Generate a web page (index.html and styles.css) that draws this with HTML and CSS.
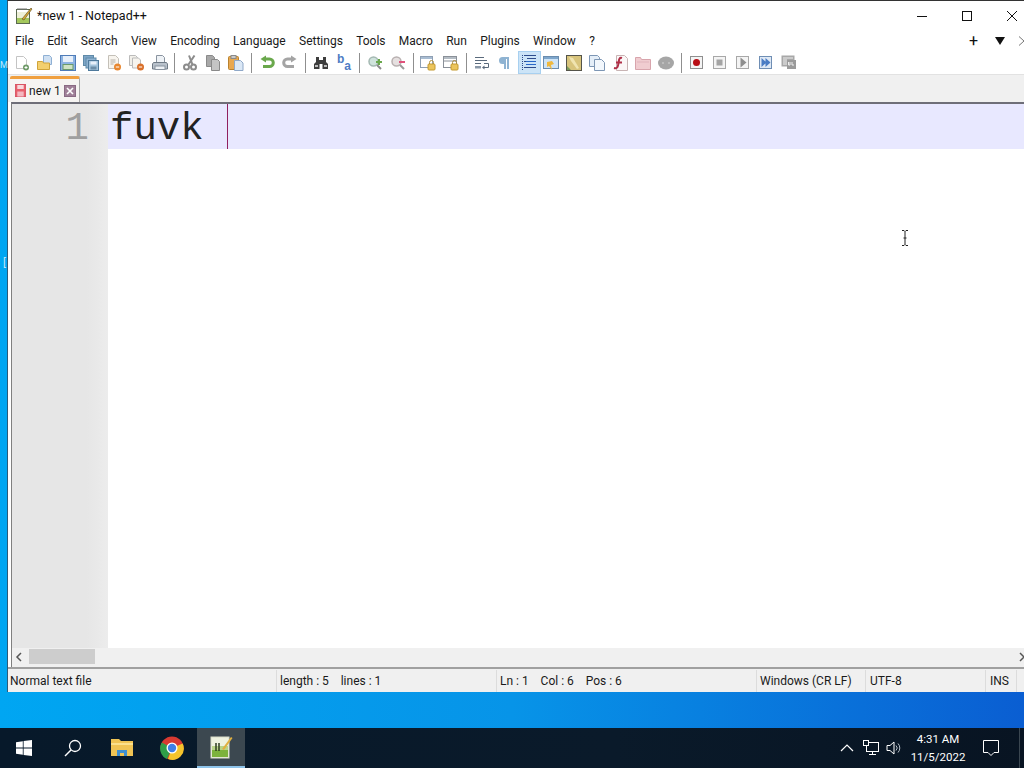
FILE: index.html
```html
<!DOCTYPE html>
<html lang="en">
<head>
    <meta charset="UTF-8">
    <meta name="viewport" content="width=device-width, initial-scale=1.0">
    <title>*new 1 - Notepad++</title>
    <link rel="stylesheet" href="styles.css">
</head>
<body>
    <svg class="sprite" width="0" height="0">
        <symbol id="i-new" viewBox="0 0 16 16"><path d="M2.500 1.500h7l3 3v9h-10z" fill="#fff" stroke="#c4c4c4"/><circle cx="12" cy="12.500" r="3" fill="#6f9a68"/><path d="M10.500 12.500h3M12 11v3" stroke="#fff"/></symbol>
        <symbol id="i-open" viewBox="0 0 16 16"><path d="M6.500 .5h6l2 2v7h-8z" fill="#cfe0f2" stroke="#8fb0d4"/><path d="M.5 6.500h5l1 1.500h6v6.500h-12z" fill="#f3cf6e" stroke="#d0a43a"/></symbol>
        <symbol id="i-save" viewBox="0 0 16 16"><rect x=".5" y=".5" width="15" height="15" fill="#8db4e2" stroke="#4f7cb8"/><rect x="3" y="1" width="10" height="6" fill="#e8f0fa"/><rect x="3" y="9.500" width="10" height="5" fill="#cfe3c4" stroke="#6a9a6a"/></symbol>
        <symbol id="i-saveall" viewBox="0 0 16 16"><rect x=".5" y=".5" width="10" height="10" fill="#7fa6c8" stroke="#5f8aa8"/><rect x="3" y="3" width="10" height="10" fill="#8fb3d2" stroke="#5f8aa8"/><rect x="5.500" y="5.500" width="10" height="10" fill="#a4c4dc" stroke="#4f7a9c"/><rect x="7.500" y="6.500" width="6" height="3" fill="#e8f0fa"/><rect x="7.500" y="11.500" width="6" height="3" fill="#6d8ea8"/></symbol>
        <symbol id="i-close" viewBox="0 0 16 16"><path d="M2.500 .5h7l3 3v10h-10z" fill="#f7f4ee" stroke="#c4c0b8"/><path d="M4.500 5h5M4.500 7h5M4.500 9h3" stroke="#b5b0a8"/><circle cx="11.500" cy="12" r="3.500" fill="#e8862e"/><path d="M9.800 12h3.400" stroke="#fff"/></symbol>
        <symbol id="i-closeall" viewBox="0 0 16 16"><path d="M.5 .5h6l2 2v8h-8z" fill="#f2f0ea" stroke="#bbb"/><path d="M3.500 3h6l2 2v8h-8z" fill="#f7f4ee" stroke="#bbb"/><circle cx="11.500" cy="12" r="3.500" fill="#d9702a"/><path d="M9.800 12h3.400" stroke="#fff"/></symbol>
        <symbol id="i-print" viewBox="0 0 16 16"><path d="M4.500 .5h6l2 2v5h-8z" fill="#eef2f6" stroke="#8a94a0"/><path d="M1.500 7.500h13l1 1.500v5h-15v-5z" fill="#b9c2cc" stroke="#6f7a86"/><rect x="3" y="11" width="10" height="3.500" fill="#eef2f6" stroke="#8a94a0"/></symbol>
        <symbol id="i-cut" viewBox="0 0 16 16"><path d="M12.500 .5L6.500 9.500M7 .5l3.500 9" stroke="#8c8c8c" stroke-width="2"/><circle cx="4.500" cy="12" r="2.500" fill="none" stroke="#8c8c8c" stroke-width="2"/><circle cx="11.500" cy="12" r="2.500" fill="none" stroke="#8c8c8c" stroke-width="2"/></symbol>
        <symbol id="i-copy" viewBox="0 0 16 16"><path d="M1.500 .5h6l2 2v9h-8z" fill="#a8a8a8" stroke="#8a8a8a"/><path d="M6.500 4.500h6l2 2v9h-8z" fill="#c4c4c4" stroke="#8a8a8a"/></symbol>
        <symbol id="i-paste" viewBox="0 0 16 16"><rect x=".5" y="1.500" width="10" height="13" rx="1" fill="#e8a850" stroke="#b8822f"/><rect x="3" y=".5" width="5" height="3" fill="#c9c9c9" stroke="#8a8a8a"/><path d="M6.500 5.500h6l2.500 2.500v7.500h-8.500z" fill="#dbe8f6" stroke="#8fa8c8"/></symbol>
        <symbol id="i-undo" viewBox="0 0 16 16"><path d="M6 4h4.500a3.800 3.800 0 0 1 0 7.600H4" fill="none" stroke="#6aa84c" stroke-width="3"/><path d="M7 .5v7L1.500 4z" fill="#6aa84c"/></symbol>
        <symbol id="i-redo" viewBox="0 0 16 16"><path d="M10 4H5.500a3.800 3.800 0 0 0 0 7.600H12" fill="none" stroke="#a4a4a4" stroke-width="3"/><path d="M9 .5v7L14.500 4z" fill="#a4a4a4"/></symbol>
        <symbol id="i-find" viewBox="0 0 16 16"><path d="M3 2h3v3h4V2h3v5l2 2v5H9.500V9h-3v5H1V9l2-2z" fill="#3d3d3d"/><path d="M2 10h3v2H2zM11 10h3v2h-3z" fill="#bbb"/></symbol>
        <symbol id="i-zoomin" viewBox="0 0 16 16"><circle cx="6.500" cy="6.500" r="4.500" fill="#cfe3dc" stroke="#a4b8b2" stroke-width="1.500"/><path d="M10 10l4 4" stroke="#8a8a8a" stroke-width="2"/><path d="M9 7h6M12 4v6" stroke="#6aa84c" stroke-width="2"/></symbol>
        <symbol id="i-zoomout" viewBox="0 0 16 16"><circle cx="6.500" cy="6.500" r="4.500" fill="#e6e0e0" stroke="#b8b0b0" stroke-width="1.500"/><path d="M10 10l4 4" stroke="#9a9a9a" stroke-width="2"/><path d="M9 7h6" stroke="#e0507a" stroke-width="2"/></symbol>
        <symbol id="i-sync-v" viewBox="0 0 16 16"><rect x=".5" y="1.500" width="12" height="11" fill="#fff" stroke="#8fa0b4"/><rect x="1" y="2" width="11" height="2" fill="#a8bcd2"/><rect x="8" y="9" width="7" height="6" rx="1" fill="#ecc55c" stroke="#c49a30"/><path d="M9.500 9V7.500a2 2 0 0 1 4 0V9" fill="none" stroke="#b09040"/></symbol>
        <symbol id="i-sync-h" viewBox="0 0 16 16"><rect x=".5" y="1.500" width="13" height="11" fill="#fff" stroke="#8a9098"/><path d="M1 6h12" stroke="#8a9098"/><rect x="1" y="2" width="12" height="2" fill="#b4bcc4"/><rect x="8" y="9" width="7" height="6" rx="1" fill="#ecc55c" stroke="#c49a30"/><path d="M9.500 9V7.500a2 2 0 0 1 4 0V9" fill="none" stroke="#b09040"/></symbol>
        <symbol id="i-wrap" viewBox="0 0 16 16"><path d="M1 2.500h9M1 5.500h12M1 8.500h6" stroke="#5a6a7c"/><path d="M10 8.500h4.500v4H9" fill="none" stroke="#5a6a7c"/><path d="M1 11h6v2.500H1z" fill="#8a98a8"/><path d="M10.500 10.500v4L8 12.500z" fill="#5a6a7c"/></symbol>
        <symbol id="i-para" viewBox="0 0 16 16"><path d="M7 2H5.500a3.500 3.500 0 0 0 0 7H7v5h2V4h1v10h2V2z" fill="#8fb3d2"/></symbol>
        <symbol id="i-indent" viewBox="0 0 16 16"><path d="M3 .5h12M6 3.500h9M3 6.500h12M6 9.500h9M3 12.500h12" stroke="#2e4c8c"/><path d="M1.500 0v16" stroke="#2e4c8c" stroke-dasharray="1 1"/><path d="M5 6h10v1H5zM5 9h10v1H5z" fill="#2968c8"/></symbol>
        <symbol id="i-lang" viewBox="0 0 16 16"><rect x=".5" y="1.500" width="15" height="12" fill="#cfe4f6" stroke="#6a8cae"/><rect x="1" y="2" width="14" height="2" fill="#7ea6cc"/><path d="M4 7l5-1 2 3-3 1 1 5-3-4-2 1z" fill="#f0b83c"/></symbol>
        <symbol id="i-map" viewBox="0 0 16 16"><rect x=".5" y=".5" width="15" height="15" fill="#d8c47c" stroke="#55544a"/><path d="M3 2l4 1 6 10-2 1L5 6z" fill="#f0e4b0"/><path d="M1 11l4 4H1z" fill="#7a9a5a"/></symbol>
        <symbol id="i-doc" viewBox="0 0 16 16"><path d="M.5 .5h8l2 2v9h-10z" fill="#e4eef8" stroke="#7d96b4"/><path d="M5.500 4.500h7l3 3v8h-10z" fill="#f2f7fc" stroke="#7d96b4"/></symbol>
        <symbol id="i-func" viewBox="0 0 16 16"><path d="M4.500 .5h8l3 3v12h-11z" fill="#fbf7f7" stroke="#c8b4b4"/><path d="M10 3C7 2 7 5 6.500 8 6 11 6 14 2 13M4 7.500h6" fill="none" stroke="#b03048" stroke-width="2"/></symbol>
        <symbol id="i-folder" viewBox="0 0 16 16"><path d="M.5 2.500h5l1 2h9v10H.5z" fill="#f0ccd0" stroke="#d8a4ac"/><path d="M2 7h12" stroke="#e0b4bc"/></symbol>
        <symbol id="i-monitor" viewBox="0 0 16 16"><ellipse cx="8" cy="8" rx="8" ry="6.500" fill="#a6a6a6"/><circle cx="5" cy="8" r="1" fill="#c4c4c4"/><circle cx="11" cy="8" r="1" fill="#c4c4c4"/></symbol>
        <symbol id="i-rec" viewBox="0 0 16 16"><rect x="1.500" y="1.500" width="12" height="12" fill="#f4f4f4" stroke="#8f8f8f"/><circle cx="7.500" cy="7.500" r="3.500" fill="#b80c14"/></symbol>
        <symbol id="i-stop" viewBox="0 0 16 16"><rect x="1.500" y="1.500" width="12" height="12" fill="#f4f4f4" stroke="#a8a8a8"/><rect x="4.500" y="4.500" width="6" height="6" fill="#a4a4a4"/></symbol>
        <symbol id="i-play" viewBox="0 0 16 16"><rect x="1.500" y="1.500" width="12" height="12" fill="#f4f4f4" stroke="#a8a8a8"/><path d="M5.500 2.500l6 5-6 5z" fill="#8e8e8e"/></symbol>
        <symbol id="i-playall" viewBox="0 0 16 16"><rect x="1.500" y="1.500" width="12" height="12" fill="#dfe9f5" stroke="#6f8eb4"/><path d="M3.500 3l5 4.500-5 4.500zM7.500 3l5 4.500-5 4.500z" fill="#4a7cc4"/></symbol>
        <symbol id="i-savemacro" viewBox="0 0 16 16"><rect x=".5" y=".5" width="13" height="11" fill="#a8a8a8"/><path d="M2 3h10M2 5h4M2 7h4M2 9h4" stroke="#eee"/><rect x="6" y="5" width="9" height="9" fill="#9a9a9a"/><path d="M7.500 7v3h1.500V7M11 7v3h2" stroke="#eee" fill="none"/></symbol>
    </svg>

    <div class="desktop">
        <span class="desk-label label-m">M</span>
        <span class="desk-label label-b">[</span>

        <div class="window">
            <div class="title-bar">
                <svg class="app-icon" viewBox="0 0 18 18" width="18" height="18">
                    <rect x="1.500" y="2.500" width="13" height="14" fill="#eef0d8" stroke="#5a6a50"/>
                    <path d="M2 3h12v2H2z" fill="#fff"/>
                    <path d="M3 3v-2M5 3v-2M7 3v-2M9 3v-2M11 3v-2" stroke="#777"/>
                    <path d="M2 11h12v5H2z" fill="#a4c85c"/>
                    <path d="M7 12L16 1l1 1L9 13z" fill="#d8a838" stroke="#5a4a20" stroke-width=".6"/>
                </svg>
                <span class="app-title">*new 1 - Notepad++</span>
                <div class="win-controls">
                    <span class="win-btn"><svg width="12" height="12" viewBox="0 0 12 12"><path d="M1 6.500h10" stroke="#111"/></svg></span>
                    <span class="win-btn"><svg width="12" height="12" viewBox="0 0 12 12"><rect x="1.500" y="1.500" width="9" height="9" fill="none" stroke="#111"/></svg></span>
                    <span class="win-btn"><svg width="12" height="12" viewBox="0 0 12 12"><path d="M1 1l10 10M11 1L1 11" stroke="#111"/></svg></span>
                </div>
            </div>

            <div class="menu-bar">
                <span>File</span><span>Edit</span><span>Search</span><span>View</span><span>Encoding</span><span>Language</span><span>Settings</span><span>Tools</span><span>Macro</span><span>Run</span><span>Plugins</span><span>Window</span><span>?</span>
                <div class="menu-right">
                    <span class="menu-plus">+</span>
                    <span class="menu-down"></span>
                    <svg width="7" height="10" viewBox="0 0 7 10"><path d="M1 .5L6 5 1 9.500" fill="none" stroke="#777"/></svg>
                </div>
            </div>

            <div class="toolbar" id="toolbar"></div>

            <div class="tab-strip">
                <div class="tab">
                    <svg width="11" height="13" viewBox="0 0 12 13" preserveAspectRatio="none"><rect x=".5" y=".5" width="11" height="12" fill="#e8606c" stroke="#d85464"/><rect x="2.500" y="1" width="7" height="4" fill="#f8d8dc"/><rect x="2.500" y="7.500" width="7" height="5" fill="#f4b8c0"/></svg>
                    <span>new 1</span>
                    <svg width="12" height="12" viewBox="0 0 12 12"><rect x=".5" y=".5" width="11" height="11" fill="#a08098" stroke="#8a6a84"/><path d="M3 3l6 6M9 3L3 9" stroke="#fff" stroke-width="1.600"/></svg>
                </div>
            </div>

            <div class="editor">
                <div class="gutter">
                    <div class="line-number">1</div>
                </div>
                <div class="text-area">
                    <div class="current-line"><span class="code">fuvk </span><span class="caret"></span></div>
                </div>
            </div>

            <div class="h-scroll">
                <svg width="8" height="10" viewBox="0 0 8 10"><path d="M6 1L2 5l4 4" fill="none" stroke="#555" stroke-width="1.500"/></svg>
                <div class="h-thumb"></div>
                <svg class="h-right" width="8" height="10" viewBox="0 0 8 10"><path d="M2 1l4 4-4 4" fill="none" stroke="#555" stroke-width="1.500"/></svg>
            </div>

            <div class="status-bar">
                <div class="panel p-type">Normal text file</div>
                <div class="panel p-size">length : 5 &nbsp;&nbsp; lines : 1</div>
                <div class="panel p-pos">Ln : 1 &nbsp;&nbsp; Col : 6 &nbsp;&nbsp; Pos : 6</div>
                <div class="panel p-eol">Windows (CR LF)</div>
                <div class="panel p-enc">UTF-8</div>
                <div class="panel p-ins">INS</div>
            </div>
        </div>

        <div class="wallpaper"></div>

        <div class="taskbar">
            <div class="task-item"><svg width="16" height="16" viewBox="0 0 16 16"><path d="M0 2.200l6.800-1v6.400H0zM7.600 1.100L16 0v7.600H7.600zM0 8.400h6.800v6.400l-6.800-1zM7.600 8.400H16V16l-8.400-1.100z" fill="#fff"/></svg></div>
            <div class="task-item search"><svg width="18" height="18" viewBox="0 0 18 18"><circle cx="11" cy="7" r="5.500" fill="none" stroke="#fff" stroke-width="1.300"/><path d="M7 11l-6 6" stroke="#fff" stroke-width="1.500"/></svg></div>
            <div class="task-item wide"><svg width="22" height="20" viewBox="0 0 22 20"><path d="M0 1h8l2 2h12v15H0z" fill="#f0c454"/><path d="M0 5h22v2H0z" fill="#fbe08c"/><path d="M6 12h10v6H6z" fill="#3f8fd0"/><path d="M9 15h4v3H9z" fill="#f0c454"/></svg></div>
            <div class="task-item wide"><svg width="24" height="24" viewBox="0 0 24 24"><circle cx="12" cy="12" r="11.500" fill="#d83a32"/><path d="M12 12L22.700 7.500A11.500 11.500 0 0 1 8 23z" fill="#f5c42c"/><path d="M12 12L7 23A11.500 11.500 0 0 1 1.800 6.500z" fill="#2f9e48"/><circle cx="12" cy="12" r="5.500" fill="#fff"/><circle cx="12" cy="12" r="4.200" fill="#3f80e8"/></svg></div>
            <div class="task-item active"><svg width="24" height="24" viewBox="0 0 24 24"><rect x="2" y="2" width="18" height="21" fill="#eef2e0" stroke="#d8dcc8"/><rect x="3" y="15" width="16" height="7" fill="#7cb23c"/><path d="M3 11h16v4H3z" fill="#b8d488"/><path d="M7 8v8M10 8v8" stroke="#2c3c20" stroke-width="1.500"/><path d="M13 14L22 2l1.500 1L15 15z" fill="#e0b040"/></svg></div>

            <div class="tray">
                <svg class="tray-up" width="14" height="8" viewBox="0 0 14 8"><path d="M1 7l6-6 6 6" fill="none" stroke="#fff" stroke-width="1.200"/></svg>
                <svg width="16" height="16" viewBox="0 0 16 16"><rect x="3.500" y="2.500" width="12" height="9" fill="none" stroke="#fff"/><rect x=".5" y=".5" width="5" height="5" fill="#0b1a28" stroke="#fff"/><path d="M9.500 11.500v3M6 14.500h7" stroke="#fff"/></svg>
                <svg width="16" height="16" viewBox="0 0 16 16"><path d="M1 5.500h3l4-3.500v12l-4-3.500H1z" fill="none" stroke="#fff"/><path d="M10 5.500a3.500 3.500 0 0 1 0 5M12 3.500a6.500 6.500 0 0 1 0 9" fill="none" stroke="#b8c0c8"/></svg>
                <div class="clock"><span>4:31 AM</span><span>11/5/2022</span></div>
                <svg class="notify" width="16" height="16" viewBox="0 0 16 16"><path d="M.5 .5h15v12H11l-3 3-3-3H.5z" fill="none" stroke="#fff"/></svg>
                <div class="show-desktop"></div>
            </div>
        </div>

        <svg class="ibeam" width="8" height="16" viewBox="0 0 8 16"><path d="M1 .5h2l1 1 1-1h2M4 1.500v13M1 15.500h2l1-1 1 1h2M2.500 8h3" fill="none" stroke="#222"/></svg>
    </div>

    <script>
        // Toolbar layout: icon name, null for a separator
        const tools = ['new','open','save','saveall','close','closeall','print',null,'cut','copy','paste',null,'undo','redo',null,'find','replace',null,'zoomin','zoomout',null,'sync-v','sync-h',null,'wrap','para','indent','lang','map','doc','func','folder','monitor',null,'rec','stop','play','playall','savemacro'];
        const toolbar = document.getElementById('toolbar');
        toolbar.innerHTML = tools.map(name => {
            if (!name) return '<span class="tool-sep"></span>';
            if (name === 'replace') return '<span class="tool replace-icon"><b>b</b><b>a</b></span>';
            const active = name === 'indent' ? ' active' : '';
            return `<span class="tool${active}"><svg width="16" height="16"><use href="#i-${name}"/></svg></span>`;
        }).join('');
    </script>
</body>
</html>
```

FILE: styles.css
```css
:root {
    --chrome: #f0f0f0;
    --text: #1a1a1a;
}

html, body {
    margin: 0;
    height: 100%;
    overflow: hidden;
}

body {
    font-family: Roboto, "Liberation Sans", sans-serif;
    font-size: 12px;
    color: var(--text);
}

.sprite {
    position: absolute;
}

.desktop {
    position: relative;
    width: 1024px;
    height: 768px;
    overflow: hidden;
    display: flex;
    flex-direction: column;
    background: linear-gradient(90deg, #00a6f2 0%, #0794e8 50%, #0a5ed2 100%);
}

/* Bits of desktop icon labels showing left of the window */
.desk-label {
    position: absolute;
    left: 0;
    font-size: 9px;
    line-height: 10px;
    color: #c4e8fa;
}

.label-m { top: 60px; }
.label-b { top: 258px; left: 3px; font-size: 11px; }

/* Window */
.window {
    width: 1027px;
    height: 692px;
    margin-left: 7px;
    flex: none;
    box-sizing: border-box;
    border-top: 1px solid #333;
    border-left: 1px solid #2d5a78;
    background: #fff;
    display: flex;
    flex-direction: column;
}

.title-bar {
    height: 29px;
    display: flex;
    align-items: center;
    padding-left: 7px;
    gap: 4px;
    font-size: 12.5px;
    flex: none;
}

.app-title {
    color: #111;
}

.win-controls {
    margin-left: auto;
    display: flex;
}

.win-btn {
    width: 45px;
    height: 29px;
    display: flex;
    align-items: center;
    justify-content: center;
}

.menu-bar {
    height: 21px;
    display: flex;
    align-items: center;
    gap: 13.3px;
    padding-left: 7px;
    flex: none;
}

.menu-right {
    margin-left: auto;
    display: flex;
    align-items: center;
    gap: 13px;
    padding-right: 9px;
}

.menu-plus {
    font-size: 16px;
    line-height: 1;
    color: #111;
    margin-right: 4px;
}

.menu-down {
    width: 0;
    height: 0;
    border-left: 5px solid transparent;
    border-right: 5px solid transparent;
    border-top: 8px solid #111;
}

.toolbar {
    height: 23px;
    display: flex;
    align-items: center;
    padding-left: 2px;
    flex: none;
    border-bottom: 1px solid #e2e2e2;
}

.tool {
    width: 23px;
    height: 23px;
    display: flex;
    align-items: center;
    justify-content: center;
    box-sizing: border-box;
}

.tool.active {
    background: #cce4f7;
    border: 1px solid #a8d0f0;
    margin: 0 -1px 0 1px;
}

.tool-sep {
    width: 7.8px;
    height: 20px;
    background: linear-gradient(#8f8f8f, #8f8f8f) center / 1px 100% no-repeat;
}

.replace-icon {
    padding: 3px 4px;
    font: 700 12px/10px "Liberation Sans", sans-serif;
    color: #4f7cc4;
}

.replace-icon b:first-child {
    align-self: flex-start;
}

.replace-icon b:last-child {
    align-self: flex-end;
}

.tab-strip {
    height: 27px;
    background: var(--chrome);
    display: flex;
    align-items: flex-end;
    padding-left: 2px;
    flex: none;
}

.tab {
    width: 70px;
    height: 26px;
    box-sizing: border-box;
    background: #f6f4f2;
    border-top: 3px solid #f0a040;
    border-right: 1px solid #a8a8a8;
    border-radius: 2px 2px 0 0;
    display: flex;
    align-items: center;
    gap: 3px;
    padding-left: 5px;
}

/* Editor */
.editor {
    flex: 1;
    display: flex;
    border-top: 2px solid #6e6e78;
    border-left: 1px solid #808080;
    margin-left: 3px;
    min-height: 0;
}

.gutter {
    width: 96px;
    flex: none;
    background: linear-gradient(90deg, #e6e6e6 0%, #e6e6e6 78%, #ececec 100%);
}

.line-number {
    height: 45px;
    padding-right: 19px;
    text-align: right;
    font: 39px/51px "Liberation Mono", monospace;
    color: #a0a0a0;
}

.text-area {
    flex: 1;
    background: #fff;
}

.current-line {
    height: 45px;
    background: #e8e8ff;
    display: flex;
    padding-left: 2px;
}

.code {
    font: 39px/51px "Liberation Mono", monospace;
    color: #222;
    white-space: pre;
}

.caret {
    flex: none;
    width: 1px;
    background: #90205f;
}

.h-scroll {
    height: 19px;
    box-sizing: border-box;
    padding: 0 0 2px 3px;
    background: var(--chrome);
    display: flex;
    align-items: center;
    margin-left: 3px;
    border-left: 1px solid #808080;
    flex: none;
}

.h-thumb {
    width: 66px;
    height: 15px;
    background: #cdcdcd;
    margin-left: 6px;
}

.h-right {
    margin-left: 923px;
}

.status-bar {
    height: 25px;
    flex: none;
    box-sizing: border-box;
    border-top: 2px solid #a0a0a0;
    padding-top: 1px;
    background: var(--chrome);
    display: flex;
    align-items: center;
    padding-left: 1px;
}

.panel {
    height: 100%;
    display: flex;
    align-items: center;
    border-right: 1px solid #dcdcdc;
    padding-left: 3px;
    box-sizing: border-box;
    white-space: pre;
}

.p-type { width: 268px; padding-left: 1px; }
.p-size { width: 220px; }
.p-pos { width: 260px; }
.p-eol { width: 109px; }
.p-enc { width: 120px; padding-left: 4px; }
.p-ins { width: 31px; padding-left: 4px; }

/* Desktop */
.wallpaper {
    height: 36px;
    flex: none;
}

.taskbar {
    height: 40px;
    flex: none;
    display: flex;
    background: linear-gradient(90deg, #07192a 0%, #0a1a2a 60%, #081422 100%);
    color: #fff;
}

.task-item {
    width: 48px;
    display: flex;
    align-items: center;
    justify-content: center;
    box-sizing: border-box;
}

.task-item.search {
    width: 49px;
}

.task-item.wide {
    width: 50px;
}

.task-item.active {
    background: #3c4850;
    border-bottom: 2px solid #8ec4ea;
}

.tray {
    margin-left: auto;
    display: flex;
    align-items: center;
    gap: 7px;
}

.tray-up {
    margin-right: 2px;
}

.clock {
    width: 66px;
    display: flex;
    flex-direction: column;
    align-items: center;
    font-size: 11.5px;
    line-height: 18px;
    margin-left: -4px;
}

.notify {
    margin-left: 5px;
}

.show-desktop {
    width: 1px;
    height: 100%;
    background: #3a4650;
    margin-left: 13px;
    margin-right: 4px;
}

/* Mouse pointer over the editor */
.ibeam {
    position: absolute;
    left: 901px;
    top: 230px;
}
```
